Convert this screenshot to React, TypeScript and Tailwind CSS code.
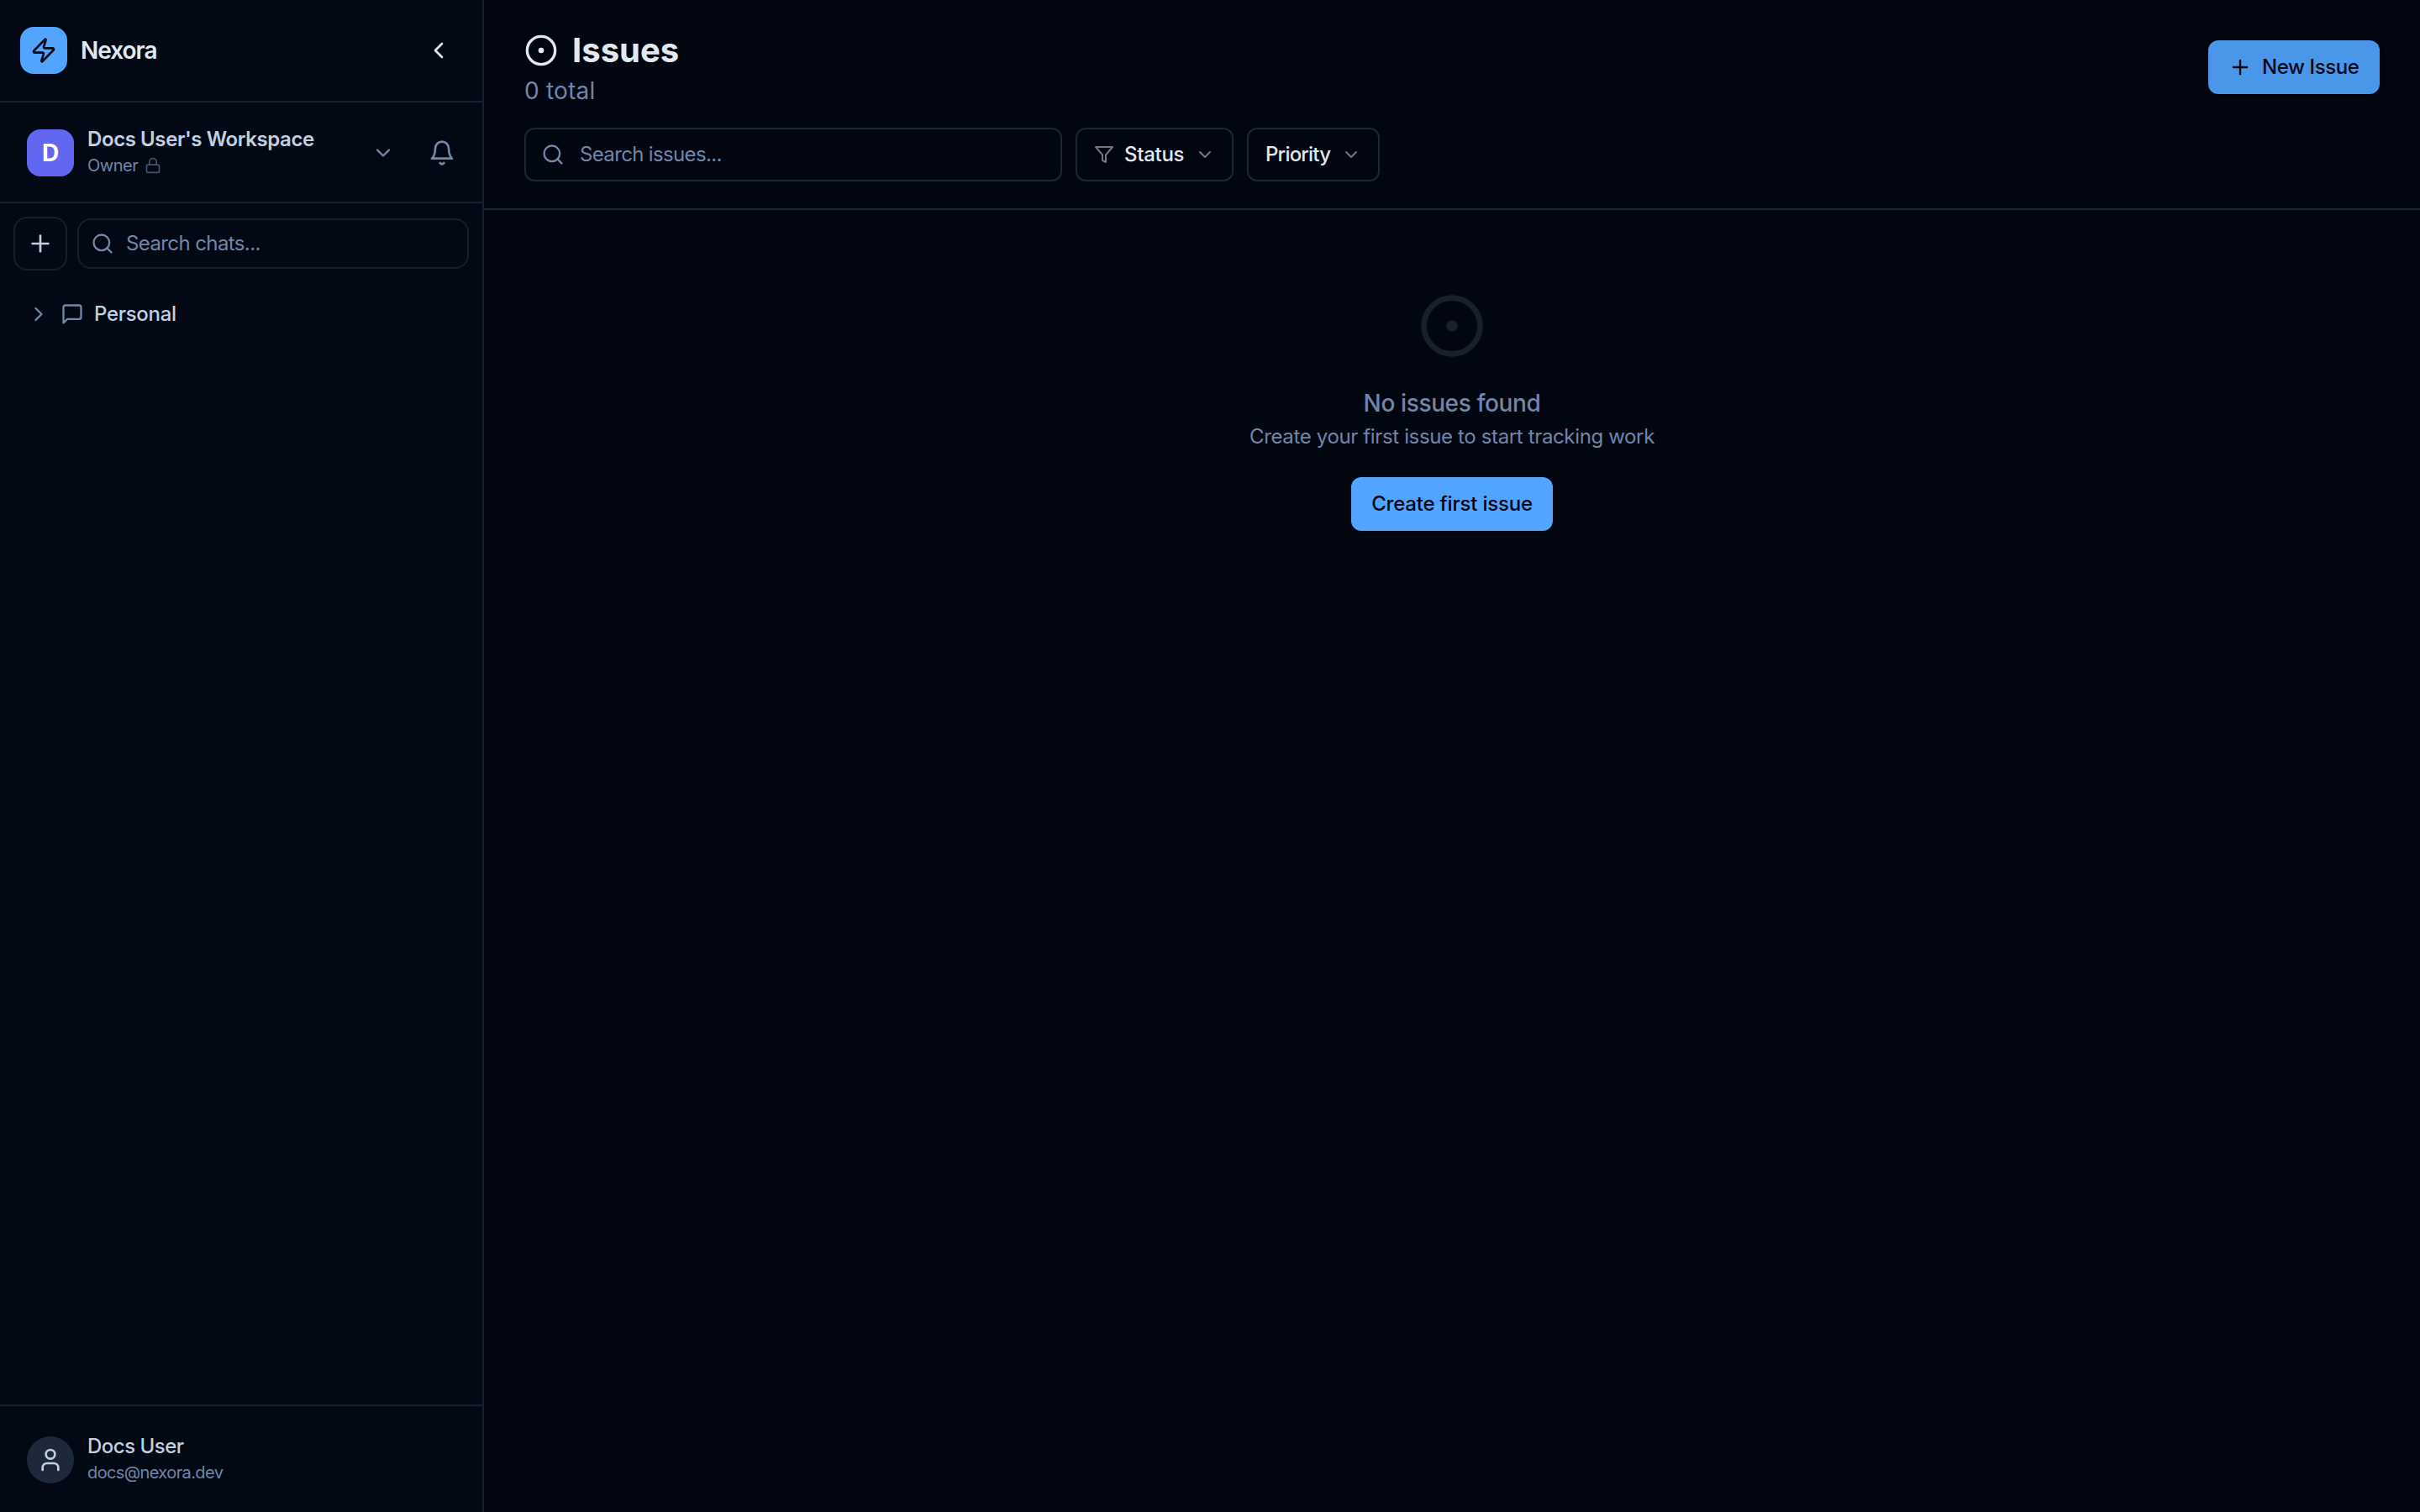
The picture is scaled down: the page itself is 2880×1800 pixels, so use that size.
import React from 'react';
import { ChevronDown, ChevronLeft, ChevronRight, CircleDot, Lock, Plus, Search, User, Zap } from 'lucide-react';

interface IconProps {
  size: number;
  className?: string;
  children?: React.ReactNode;
}

const Icon: React.FC<IconProps> = ({ size, className, children }) => {
  return (
    <svg
      width={size}
      height={size}
      viewBox="0 0 24 24"
      fill="none"
      stroke="currentColor"
      strokeWidth="2"
      strokeLinecap="round"
      strokeLinejoin="round"
      className={className}
    >
      {children}
    </svg>
  );
};

const BellIcon: React.FC<IconProps> = (props) => (
  <Icon {...props}>
    <path d="M6 8a6 6 0 0 1 12 0c0 7 3 9 3 9H3s3-2 3-9" />
    <path d="M10.3 21a1.94 1.94 0 0 0 3.4 0" />
  </Icon>
);

const MessageIcon: React.FC<IconProps> = (props) => (
  <Icon {...props}>
    <path d="M21 15a2 2 0 0 1-2 2H7l-4 4V5a2 2 0 0 1 2-2h14a2 2 0 0 1 2 2z" />
  </Icon>
);

const FilterIcon: React.FC<IconProps> = (props) => (
  <Icon {...props}>
    <polygon points="22 3 2 3 10 12.46 10 19 14 21 14 12.46 22 3" />
  </Icon>
);

interface FilterButtonProps {
  label: string;
  icon?: React.ReactNode;
  labelClass: string;
  className: string;
}

const FilterButton: React.FC<FilterButtonProps> = ({ label, icon, labelClass, className }) => {
  return (
    <button
      className={`flex h-16 items-center rounded-xl border-2 border-[#1c2638] px-5 text-2xl font-medium text-[#e2e8f0] ${className}`}
    >
      {icon}
      <span className={labelClass}>{label}</span>
      <ChevronDown size={24} className="ml-auto text-[#727784]" />
    </button>
  );
};

const Sidebar: React.FC = () => {
  return (
    <aside className="flex w-[576px] shrink-0 flex-col border-r-2 border-[#17202e] bg-[#020914]">
      <div className="flex h-[122px] items-center border-b-2 border-[#17202e] pl-6 pr-9">
        <div className="flex size-14 items-center justify-center rounded-2xl bg-[#51a5ff] text-[#020914]">
          <Zap size={32} />
        </div>
        <span className="ml-4 text-[28px] font-semibold tracking-[-1px] text-[#e2e8f0]">Nexora</span>
        <ChevronLeft size={32} className="ml-auto text-[#e2e8f0]" />
      </div>

      <div className="flex h-[120px] items-center border-b-2 border-[#17202e] px-8 pt-0.5">
        <div className="flex size-14 items-center justify-center rounded-2xl bg-[#6366f1] text-[28px] font-bold text-white">
          D
        </div>
        <div className="ml-4 flex flex-col pb-0.5">
          <span className="text-2xl leading-8 font-semibold tracking-[-0.41px] text-[#c0d0e2]">
            Docs User's Workspace
          </span>
          <span className="flex items-center gap-2 text-xl leading-[30px] tracking-[-0.5px] text-[#7086a8]">
            Owner
            <Lock size={20} className="text-[#475368]" />
          </span>
        </div>
        <ChevronDown size={28} className="ml-auto text-[#7387a6]" />
        <BellIcon size={32} className="ml-10 text-[#7387a6]" />
      </div>

      <div className="flex items-center gap-3 px-4 pt-4">
        <button className="flex size-16 items-center justify-center rounded-2xl border-2 border-[#161e2c] text-[#c0d0e2]">
          <Plus size={32} />
        </button>
        <div className="flex h-[60px] w-[466px] items-center rounded-2xl border-2 border-[#161e2c] pl-3.5 text-[#7387a6]">
          <Search size={28} />
          <span className="ml-3.5 text-2xl tracking-[-0.6px] text-[#7086a8]">Search chats...</span>
        </div>
      </div>

      <div className="mt-8 flex h-10 items-center pl-8">
        <ChevronRight size={28} className="text-[#7387a6]" />
        <MessageIcon size={28} className="ml-3 text-[#7387a6]" />
        <span className="ml-3 text-2xl font-medium tracking-[-0.3px] text-[#c0d0e2]">Personal</span>
      </div>

      <div className="mt-auto flex h-32 items-center border-t-2 border-[#17202e] pl-8 pt-0.5">
        <div className="flex size-14 items-center justify-center rounded-full bg-[#1d293b] text-[#c0d0e2]">
          <User size={32} />
        </div>
        <div className="ml-4 flex flex-col pb-0.5">
          <span className="text-2xl leading-8 font-medium tracking-[-0.5px] text-[#c0d0e2]">Docs User</span>
          <span className="text-xl leading-[30px] tracking-[-0.6px] text-[#7086a8]">docs@nexora.dev</span>
        </div>
      </div>
    </aside>
  );
};

const IssuesHeader: React.FC = () => {
  return (
    <header className="h-[250px] border-b-2 border-[#1c2638] px-12 pt-8">
      <div className="flex h-[104px] items-start justify-between">
        <div>
          <h1 className="flex items-center text-[40px] leading-14 font-bold text-[#e2e8f0]">
            <CircleDot size={40} className="mr-[17px]" />
            Issues
          </h1>
          <p className="text-[28px] leading-10 tracking-[0.2px] text-[#7086a8]">0 total</p>
        </div>
        <button className="mt-4 flex h-16 w-[204px] items-center rounded-xl bg-[#4a97e9] pl-6 text-2xl font-medium tracking-[-0.4px] text-[#020611] shadow-sm">
          <Plus size={28} className="mr-3" />
          New Issue
        </button>
      </div>
      <div className="mt-4 flex gap-4">
        <div className="flex h-16 w-[640px] items-center rounded-xl border-2 border-[#1c2638] pl-[18px] text-[#7387a6]">
          <Search size={28} />
          <span className="ml-[18px] text-2xl tracking-[-0.65px] text-[#7086a8]">Search issues...</span>
        </div>
        <FilterButton
          label="Status"
          icon={<FilterIcon size={24} className="mr-3 text-[#727784]" />}
          labelClass="tracking-[-0.3px]"
          className="w-[188px]"
        />
        <FilterButton label="Priority" labelClass="tracking-[-0.8px]" className="w-[158px]" />
      </div>
    </header>
  );
};

const EmptyState: React.FC = () => {
  return (
    <div className="flex flex-col items-center pt-[98px]">
      <CircleDot size={80} className="text-[#19202d]" />
      <p className="mt-8 text-[28px] leading-10 font-medium tracking-[-0.37px] text-[#7086a8]">No issues found</p>
      <p className="mt-1 text-2xl leading-8 tracking-[-0.36px] text-[#7086a8]">
        Create your first issue to start tracking work
      </p>
      <button className="mt-8 h-16 w-60 rounded-xl bg-[#51a5ff] text-2xl font-medium tracking-[-0.2px] text-[#020611] shadow-sm">
        Create first issue
      </button>
    </div>
  );
};

const App: React.FC = () => {
  return (
    <div className="flex h-[1800px] w-[2880px] bg-[#020611] font-['Inter','Liberation_Sans',sans-serif]">
      <Sidebar />
      <main className="flex-1">
        <IssuesHeader />
        <EmptyState />
      </main>
    </div>
  );
};

export default App;
